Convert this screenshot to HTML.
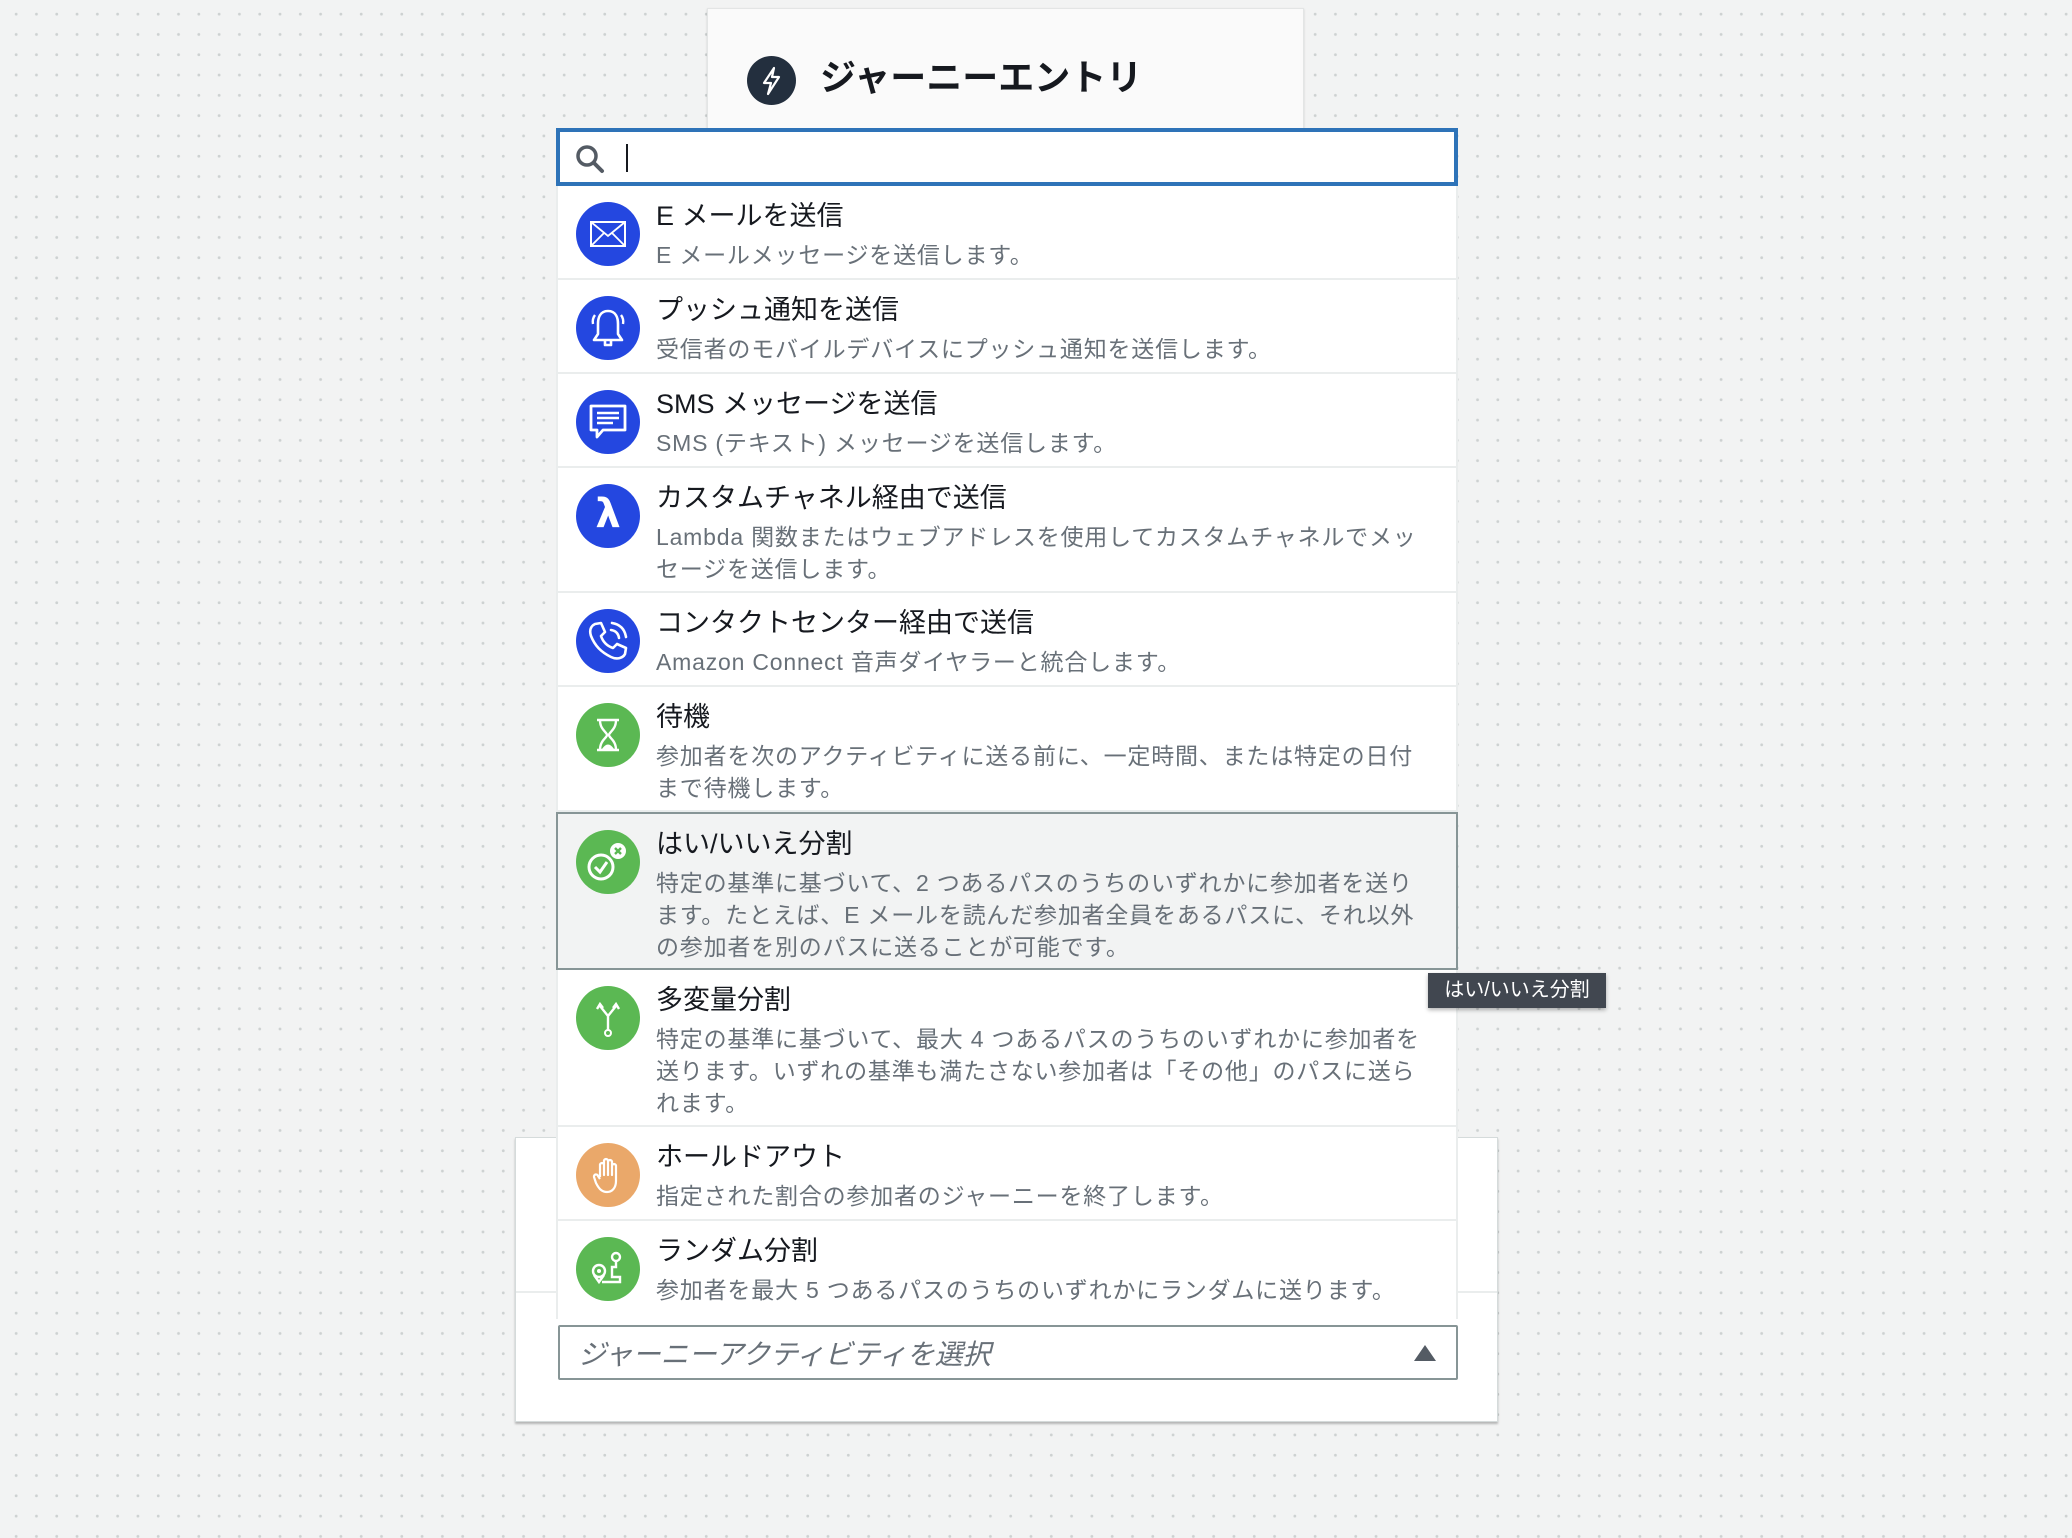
<!DOCTYPE html>
<html><head><meta charset="utf-8">
<style>
*{box-sizing:border-box;margin:0;padding:0}
body{width:2072px;height:1538px;overflow:hidden;background-color:#f2f3f3;background-image:radial-gradient(circle,#cdd1d1 1.3px,transparent 1.6px);background-size:20.3px 20.3px;background-position:6px 4px;font-family:"Liberation Sans","Noto Sans CJK JP",sans-serif;position:relative}
.card{position:absolute;left:707px;top:8px;width:597px;height:130px;background:#fafafa;border:1px solid #e3e5e5;box-shadow:0 1px 2px rgba(0,0,0,.15)}
.card .ic{position:absolute;left:39px;top:47px;width:49px;height:49px;border-radius:50%;background:#232f3e}
.card .t{position:absolute;left:112px;top:40px;font-size:36px;font-weight:bold;color:#16191f;letter-spacing:0}
.bottom{position:absolute;left:515px;top:1137px;width:983px;height:285px;background:#fff;border:1px solid #d5dbdb;box-shadow:0 2px 2px rgba(0,0,0,.25)}
.bottom .line{position:absolute;left:0;right:0;top:153px;height:2px;background:#eaeded}
.bottom .sel{position:absolute;left:42px;top:187px;width:900px;height:55px;border:2px solid #879596;border-radius:2px;background:#fff}
.sel .ph{position:absolute;left:18px;top:6px;font-size:28px;font-style:italic;color:#687078}
.sel .tri{position:absolute;right:20px;top:18px;width:0;height:0;border-left:11px solid transparent;border-right:11px solid transparent;border-bottom:16px solid #545b64}
.search{position:absolute;left:556px;top:128px;width:902px;height:58px;background:#fff;border:4px solid #2e73b8}
.search .cur{position:absolute;left:66px;top:12px;width:2px;height:28px;background:#16191f}
.list{position:absolute;left:556px;top:186px;width:902px;background:#fff;border-left:2px solid #eaeded;border-right:2px solid #eaeded}
.row{position:relative;border-bottom:2px solid #eaeded}
.row.h{background:#f2f3f3;border:2px solid #879596;margin:0 -2px;}
.row .i{position:absolute;left:18px;top:16px;width:64px;height:64px;border-radius:50%;display:flex;align-items:center;justify-content:center}
.blue{background:#2447e0}.green{background:#5bb853}.orange{background:#eaa86a}
.row .tt{position:absolute;left:98px;top:10px;font-size:27px;color:#16191f;line-height:40px;white-space:nowrap}
.row .d{position:absolute;left:98px;top:53px;width:790px;font-size:23px;letter-spacing:0.8px;color:#687078;line-height:32px;white-space:nowrap}
.tip{position:absolute;left:1428px;top:973px;width:178px;height:35px;background:#414750;color:#fff;font-size:20px;line-height:35px;text-align:center;box-shadow:0 2px 4px rgba(0,0,0,.3)}
</style></head><body>
<div class="card"><div class="ic"><svg width="49" height="49" viewBox="0 0 49 49"><path d="M27 12 L17 27 H24 L21 38 L32 21 H25 Z" fill="none" stroke="#fff" stroke-width="2.2" stroke-linejoin="round"/></svg></div><div class="t">ジャーニーエントリ</div></div>

<div class="bottom"><div class="line"></div><div class="sel"><div class="ph">ジャーニーアクティビティを選択</div><div class="tri"></div></div></div>

<div class="search"><svg style="position:absolute;left:14px;top:11px" width="32" height="32" viewBox="0 0 32 32"><circle cx="13" cy="13" r="9" fill="none" stroke="#545b64" stroke-width="3.5"/><path d="M20 20 L28 28" stroke="#545b64" stroke-width="4" stroke-linecap="round"/></svg><div class="cur"></div></div>

<div class="list">
<div class="row" style="height:94px"><div class="i blue"><svg width="36" height="26" viewBox="0 0 36 26"><rect x="1" y="1" width="34" height="24" fill="none" stroke="#fff" stroke-width="2"/><path d="M1 1 L18 15 L35 1 M1 25 L14 12 M35 25 L22 12" fill="none" stroke="#fff" stroke-width="1.8"/></svg></div><div class="tt">E メールを送信</div><div class="d">E メールメッセージを送信します。</div></div>
<div class="row" style="height:94px"><div class="i blue"><svg width="40" height="44" viewBox="0 0 40 44"><path d="M20 5 C12 5 10 12 10 18 V28 L6 34 H34 L30 28 V18 C30 12 28 5 20 5 Z M17 34 V39 H23 V34" fill="none" stroke="#fff" stroke-width="2.6" stroke-linejoin="round"/><path d="M7 9 Q4 13 5 18 M33 9 Q36 13 35 18" fill="none" stroke="#fff" stroke-width="2.4"/></svg></div><div class="tt">プッシュ通知を送信</div><div class="d">受信者のモバイルデバイスにプッシュ通知を送信します。</div></div>
<div class="row" style="height:94px"><div class="i blue"><svg width="40" height="40" viewBox="0 0 40 40"><path d="M3 4 H37 V28 H15 L9 35 V28 H3 Z" fill="none" stroke="#fff" stroke-width="2.8" stroke-linejoin="round"/><path d="M9 11 H31 M9 16 H31 M9 21 H25" stroke="#fff" stroke-width="2.6"/></svg></div><div class="tt">SMS メッセージを送信</div><div class="d">SMS (テキスト) メッセージを送信します。</div></div>
<div class="row" style="height:125px"><div class="i blue"><span style="color:#fff;font-size:40px;font-weight:bold;font-family:'DejaVu Sans',sans-serif;margin-top:-4px">λ</span></div><div class="tt">カスタムチャネル経由で送信</div><div class="d">Lambda 関数またはウェブアドレスを使用してカスタムチャネルでメッ<br>セージを送信します。</div></div>
<div class="row" style="height:94px"><div class="i blue"><svg width="46" height="46" viewBox="0 0 46 46"><path d="M10 6 L16 5 L20 14 L16 18 C18 24 22 28 28 30 L32 26 L41 30 L40 36 C38 40 32 42 26 39 C16 34 10 28 6 18 C4 12 6 8 10 6 Z" fill="none" stroke="#fff" stroke-width="2.6" stroke-linejoin="round"/><path d="M26 12 Q33 13 34 20 M27 5 Q39 7 41 19" fill="none" stroke="#fff" stroke-width="2.6" stroke-linecap="round"/></svg></div><div class="tt">コンタクトセンター経由で送信</div><div class="d">Amazon Connect 音声ダイヤラーと統合します。</div></div>
<div class="row" style="height:125px"><div class="i green"><svg width="26" height="34" viewBox="0 0 26 34"><path d="M2 2 H24 M2 32 H24 M5 2 C5 12 12 14 12 17 C12 20 5 22 5 32 M21 2 C21 12 14 14 14 17 C14 20 21 22 21 32" fill="none" stroke="#fff" stroke-width="2.4"/><path d="M7 31 Q13 22 19 31 Z" fill="#fff"/></svg></div><div class="tt">待機</div><div class="d">参加者を次のアクティビティに送る前に、一定時間、または特定の日付<br>まで待機します。</div></div>
<div class="row h" style="height:158px"><div class="i green" style="left:18px"><svg width="46" height="46" viewBox="0 0 46 46"><circle cx="16" cy="28" r="12" fill="none" stroke="#fff" stroke-width="3"/><path d="M10 28 L15 33 L22 23" fill="none" stroke="#fff" stroke-width="3"/><circle cx="33" cy="12" r="8" fill="#fff"/><path d="M30 9 L36 15 M36 9 L30 15" stroke="#5bb853" stroke-width="2.4"/></svg></div><div class="tt">はい/いいえ分割</div><div class="d">特定の基準に基づいて、2 つあるパスのうちのいずれかに参加者を送り<br>ます。たとえば、E メールを読んだ参加者全員をあるパスに、それ以外<br>の参加者を別のパスに送ることが可能です。</div></div>
<div class="row" style="height:157px"><div class="i green"><svg width="30" height="40" viewBox="0 0 30 40"><path d="M15 32 V18 L7 8 M15 18 L23 8 M4 11 L7 6 L10 10 M20 10 L23 6 L26 11" fill="none" stroke="#fff" stroke-width="2.4"/><circle cx="15" cy="35" r="3" fill="none" stroke="#fff" stroke-width="2"/></svg></div><div class="tt">多変量分割</div><div class="d">特定の基準に基づいて、最大 4 つあるパスのうちのいずれかに参加者を<br>送ります。いずれの基準も満たさない参加者は「その他」のパスに送ら<br>れます。</div></div>
<div class="row" style="height:94px"><div class="i orange"><svg width="34" height="40" viewBox="0 0 34 40"><path d="M9 22 V10 a2 2 0 0 1 4 0 V20 V6 a2 2 0 0 1 4 0 V20 V7 a2 2 0 0 1 4 0 V20 V11 a2 2 0 0 1 4 0 V26 C25 33 21 37 16 37 C11 37 8 34 5 28 L3 22 a2 2 0 0 1 4 -1 L9 24" fill="none" stroke="#fff" stroke-width="2.2" stroke-linejoin="round"/></svg></div><div class="tt">ホールドアウト</div><div class="d">指定された割合の参加者のジャーニーを終了します。</div></div>
<div class="row" style="height:98px;border-bottom:none"><div class="i green"><svg width="40" height="40" viewBox="0 0 40 40"><circle cx="11" cy="22" r="6" fill="none" stroke="#fff" stroke-width="2.4"/><circle cx="11" cy="22" r="2" fill="#fff"/><path d="M6 26 L11 33 L16 26" fill="none" stroke="#fff" stroke-width="2.4"/><circle cx="28" cy="8" r="4" fill="none" stroke="#fff" stroke-width="2.4"/><path d="M28 12 V18 H24 V28 H32 V33 H14" fill="none" stroke="#fff" stroke-width="2.4"/></svg></div><div class="tt">ランダム分割</div><div class="d">参加者を最大 5 つあるパスのうちのいずれかにランダムに送ります。</div></div>
</div>

<div class="tip">はい/いいえ分割</div>
</body></html>
